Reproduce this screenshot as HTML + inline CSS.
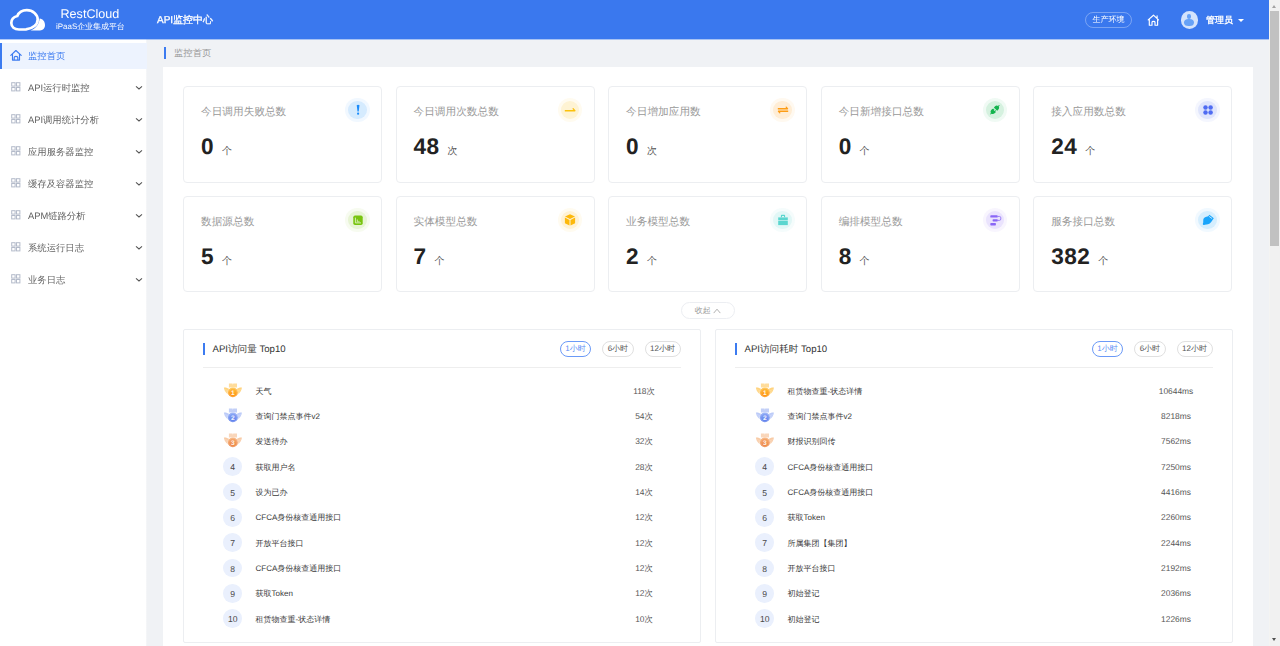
<!DOCTYPE html>
<html><head><meta charset="utf-8"><title>API监控中心</title>
<style>
*{margin:0;padding:0;box-sizing:border-box}
html,body{text-rendering:geometricPrecision;width:1280px;height:646px;overflow:hidden;background:#f0f2f5;font-family:"Liberation Sans",sans-serif;position:relative}
#hdr{position:absolute;left:0;top:0;width:1269px;height:39px;background:#3a78ee;box-shadow:0 1px 0 rgba(59,122,240,.4);z-index:2}
#logo{position:absolute;left:5px;top:5px}
#brand{position:absolute;left:60.5px;top:7px;font-size:12.6px;line-height:15px;color:#fff}
#sub{position:absolute;left:56px;top:21.6px;font-size:7.95px;line-height:9px;color:#fff;white-space:nowrap}
#app{position:absolute;left:157px;top:15px;font-size:10px;line-height:12px;color:#fff;-webkit-text-stroke:0.3px #fff;white-space:nowrap}
#env{position:absolute;left:1085px;top:12px;width:47px;height:15.5px;border:1px solid rgba(255,255,255,.32);border-radius:8px;color:#fff;font-size:8px;line-height:13.5px;text-align:center}
#home{position:absolute;left:1144px;top:11px}
#avatar{position:absolute;left:1180.5px;top:11px;width:17.5px;height:17.5px;border-radius:50%;background:#d4e3fc;overflow:hidden}
#avatar .ah{position:absolute;left:6.3px;top:2.9px;width:4.7px;height:4.7px;border-radius:50%;background:#66a1f7}
#avatar .ab{position:absolute;left:3.9px;top:7.6px;width:9.4px;height:7.2px;border-radius:50%;background:#66a1f7}
#uname{position:absolute;left:1206px;top:14.2px;font-size:9px;line-height:12px;color:#fff;font-weight:bold}
#caret{position:absolute;left:1238px;top:19.3px;width:0;height:0;border-left:3px solid transparent;border-right:3px solid transparent;border-top:3.5px solid #fff}
#side{position:absolute;left:0;top:39px;width:148px;height:607px;background:linear-gradient(90deg,#fff 0,#fff 145.6px,#eceef2 147.2px,#f0f2f5 148px);will-change:transform}
.mi{position:absolute;left:0;width:147px;height:26.67px;margin-top:-39px}
.mi.act{background:#edf3fe;border-left:2px solid #3c7bf0}
.mi .gi{position:absolute;left:11px;top:7.6px}
.mi .hi{position:absolute;left:6px;top:4.33px}
.mi .mt{position:absolute;left:28px;top:7px;font-size:9.33px;line-height:12px;color:#626262;white-space:nowrap}
.mi.act .mt{left:26px;color:#3c7bf0}
.mi .chev{position:absolute;left:135px;top:10.6px}
#main{position:absolute;left:147px;top:39px;width:1122px;height:607px;background:#f0f2f5}
#bcbar{position:absolute;left:17px;top:8px;width:2px;height:12px;background:#3c7bf0}
#bc{position:absolute;left:27px;top:8px;font-size:9.33px;line-height:12px;color:#999}
#wrap{position:absolute;left:16px;top:28px;width:1090px;height:600px;background:#fff}
.card{position:absolute;width:199.3px;height:96.6px;border:1px solid #eceef1;border-radius:4px;background:#fff}
.ct{position:absolute;left:17px;top:17.4px;font-size:10.67px;line-height:14px;color:#999;white-space:nowrap}
.ic{position:absolute;right:11.5px;top:10.5px;width:24.5px;height:24.5px;border-radius:50%}
.ic .ici{position:absolute;left:3px;top:3px;width:18.5px;height:18.5px;border-radius:50%}
.ic svg{position:absolute;left:0.25px;top:0.25px}
.cn{position:absolute;left:17px;top:47.7px;white-space:nowrap}
.num{font-size:22.6px;line-height:24px;font-weight:bold;color:#222;letter-spacing:0.5px}
.unit{font-size:10px;color:#555;margin-left:7.8px;position:relative;top:0.2px}
#collapse{position:absolute;left:681px;top:302px;width:54px;height:17.3px;border:1px solid #eceef2;border-radius:9px;background:#fff;font-size:8px;line-height:15.3px;color:#999;text-align:center}
.panel{position:absolute;top:329.4px;width:518px;height:313.4px;border:1px solid #eceef1;border-radius:2px;background:#fff}
.pbar{position:absolute;left:19px;top:12.5px;width:2.3px;height:12px;background:#3c7bf0}
.ptitle{position:absolute;left:28.5px;top:14px;font-size:9.6px;line-height:12px;color:#333;white-space:nowrap}
.btns{position:absolute;right:19.5px;top:10.5px;display:flex;gap:11px}
.btn{display:block;height:16.3px;padding:0 4.5px;border:1px solid #e0e0e0;border-radius:8.5px;font-size:8px;line-height:14.3px;color:#555;white-space:nowrap}
.btn.act{border-color:#6b9af7;color:#5b8ff6}
.pdiv{position:absolute;left:19px;right:19.5px;top:37px;height:1px;background:#eeeeee}
.rk{position:absolute;width:18.6px;height:18.6px;border-radius:50%;background:#eaf0fd;color:#4a4a4a;font-size:8.6px;line-height:21.6px;text-align:center}
.rn{position:absolute;font-size:8px;line-height:12px;color:#3a3a3a;white-space:nowrap}
.rv{position:absolute;width:80px;text-align:center;font-size:8.4px;line-height:12px;color:#555;white-space:nowrap}
.medal{position:absolute}
#sb{position:absolute;left:1269px;top:0;width:11px;height:646px;background:#f1f1f1;border-left:1px solid #f4f4f2}
#thumb{position:absolute;left:0.2px;top:11px;width:8.5px;height:235px;background:#c1c1c1}
#sbup{position:absolute;left:1.9px;top:4.6px;width:0;height:0;border-left:2.4px solid transparent;border-right:2.4px solid transparent;border-bottom:3px solid #a3a3a3}
#sbdn{position:absolute;left:1.7px;top:638.2px;width:0;height:0;border-left:2.7px solid transparent;border-right:2.7px solid transparent;border-top:3px solid #505050}

</style></head><body>
<div id="hdr">
<svg id="logo" width="45" height="30" viewBox="0 0 45 30"><path d="M12.3 11 C14 7 17.5 5.1 21.8 5.1 C27.8 5.1 32.7 9.5 32.7 14.4 C32.7 19.5 28 23.6 21 24.4 L14 24.5 C9.5 24.5 6.3 21.8 6.3 18.1 C6.3 14.5 9 11.8 12.3 11 Z" fill="none" stroke="#fff" stroke-width="2.7"/><path d="M34.6 13.4 C38 13.8 40 16.6 40 20 C40 23.2 38 25.4 35 25.4 L25.5 25.6 C30.5 23.6 34.3 19.2 34.6 13.4 Z" fill="#fff"/></svg>
<div id="brand">RestCloud</div>
<div id="sub">iPaaS企业集成平台</div>
<div id="app">API监控中心</div>
<div id="env">生产环境</div>
<svg id="home" width="18" height="18" viewBox="0 0 18 18"><path d="M4.2 8.9 L9.5 4.2 L14.5 8.9 M5.3 8 V14.2 H8 V11.2 Q8 10.3 9.5 10.3 Q11 10.3 11 11.2 V14.2 H13.6 V8 M13.1 4.9 V6.9" fill="none" stroke="#fff" stroke-width="1.15" stroke-linejoin="round" stroke-linecap="round"/></svg>
<div id="avatar"><div class="ah"></div><div class="ab"></div></div>
<div id="uname">管理员</div>
<div id="caret"></div>
</div>
<div id="side">
<div class="mi act" style="top:42.67px"><svg class="hi" width="16" height="16" viewBox="0 0 16 16"><path d="M2.8 8.4 L7.9 3.5 L13.2 8.4 M4.5 7.2 V13.1 H11.5 V7.2 M6.2 13.1 V10.4 Q6.2 9.3 7.9 9.3 Q9.8 9.3 9.8 10.4 V13.1" fill="none" stroke="#3c7bf0" stroke-width="1.15" stroke-linejoin="round" stroke-linecap="round"/></svg><span class="mt">监控首页</span></div>
<div class="mi" style="top:74.67px"><svg class="gi" width="10" height="10" viewBox="0 0 10 10"><g fill="none" stroke="#b4bbca" stroke-width="1"><rect x="0.7" y="0.7" width="3.4" height="3.4"/><rect x="5.5" y="0.7" width="3.4" height="3.4"/><rect x="0.7" y="5.5" width="3.4" height="3.4"/><rect x="5.5" y="5.5" width="3.4" height="3.4"/></g></svg><span class="mt">API运行时监控</span><svg class="chev" width="8" height="6" viewBox="0 0 8 6"><path d="M1 1.4 L4 4 L7 1.4" fill="none" stroke="#555" stroke-width="1.05"/></svg></div>
<div class="mi" style="top:106.67px"><svg class="gi" width="10" height="10" viewBox="0 0 10 10"><g fill="none" stroke="#b4bbca" stroke-width="1"><rect x="0.7" y="0.7" width="3.4" height="3.4"/><rect x="5.5" y="0.7" width="3.4" height="3.4"/><rect x="0.7" y="5.5" width="3.4" height="3.4"/><rect x="5.5" y="5.5" width="3.4" height="3.4"/></g></svg><span class="mt">API调用统计分析</span><svg class="chev" width="8" height="6" viewBox="0 0 8 6"><path d="M1 1.4 L4 4 L7 1.4" fill="none" stroke="#555" stroke-width="1.05"/></svg></div>
<div class="mi" style="top:138.67px"><svg class="gi" width="10" height="10" viewBox="0 0 10 10"><g fill="none" stroke="#b4bbca" stroke-width="1"><rect x="0.7" y="0.7" width="3.4" height="3.4"/><rect x="5.5" y="0.7" width="3.4" height="3.4"/><rect x="0.7" y="5.5" width="3.4" height="3.4"/><rect x="5.5" y="5.5" width="3.4" height="3.4"/></g></svg><span class="mt">应用服务器监控</span><svg class="chev" width="8" height="6" viewBox="0 0 8 6"><path d="M1 1.4 L4 4 L7 1.4" fill="none" stroke="#555" stroke-width="1.05"/></svg></div>
<div class="mi" style="top:170.67px"><svg class="gi" width="10" height="10" viewBox="0 0 10 10"><g fill="none" stroke="#b4bbca" stroke-width="1"><rect x="0.7" y="0.7" width="3.4" height="3.4"/><rect x="5.5" y="0.7" width="3.4" height="3.4"/><rect x="0.7" y="5.5" width="3.4" height="3.4"/><rect x="5.5" y="5.5" width="3.4" height="3.4"/></g></svg><span class="mt">缓存及容器监控</span><svg class="chev" width="8" height="6" viewBox="0 0 8 6"><path d="M1 1.4 L4 4 L7 1.4" fill="none" stroke="#555" stroke-width="1.05"/></svg></div>
<div class="mi" style="top:202.67px"><svg class="gi" width="10" height="10" viewBox="0 0 10 10"><g fill="none" stroke="#b4bbca" stroke-width="1"><rect x="0.7" y="0.7" width="3.4" height="3.4"/><rect x="5.5" y="0.7" width="3.4" height="3.4"/><rect x="0.7" y="5.5" width="3.4" height="3.4"/><rect x="5.5" y="5.5" width="3.4" height="3.4"/></g></svg><span class="mt">APM链路分析</span><svg class="chev" width="8" height="6" viewBox="0 0 8 6"><path d="M1 1.4 L4 4 L7 1.4" fill="none" stroke="#555" stroke-width="1.05"/></svg></div>
<div class="mi" style="top:234.67px"><svg class="gi" width="10" height="10" viewBox="0 0 10 10"><g fill="none" stroke="#b4bbca" stroke-width="1"><rect x="0.7" y="0.7" width="3.4" height="3.4"/><rect x="5.5" y="0.7" width="3.4" height="3.4"/><rect x="0.7" y="5.5" width="3.4" height="3.4"/><rect x="5.5" y="5.5" width="3.4" height="3.4"/></g></svg><span class="mt">系统运行日志</span><svg class="chev" width="8" height="6" viewBox="0 0 8 6"><path d="M1 1.4 L4 4 L7 1.4" fill="none" stroke="#555" stroke-width="1.05"/></svg></div>
<div class="mi" style="top:266.67px"><svg class="gi" width="10" height="10" viewBox="0 0 10 10"><g fill="none" stroke="#b4bbca" stroke-width="1"><rect x="0.7" y="0.7" width="3.4" height="3.4"/><rect x="5.5" y="0.7" width="3.4" height="3.4"/><rect x="0.7" y="5.5" width="3.4" height="3.4"/><rect x="5.5" y="5.5" width="3.4" height="3.4"/></g></svg><span class="mt">业务日志</span><svg class="chev" width="8" height="6" viewBox="0 0 8 6"><path d="M1 1.4 L4 4 L7 1.4" fill="none" stroke="#555" stroke-width="1.05"/></svg></div>
</div>
<div id="main">
<div id="bcbar"></div><div id="bc">监控首页</div>
<div id="wrap"></div>
</div>
<div class="card" style="left:183.00px;top:86.40px;height:96.6px">
<div class="ct">今日调用失败总数</div>
<div class="ic" style="background:#1b8cfb10"><div class="ici" style="background:#1b8cfb20"></div><svg viewBox="0 0 24 24" width="24" height="24" fill="#1b8cfb" stroke="#1b8cfb" stroke-width="0"><path d="M10.7 7.2 Q12.1 6.2 13.5 7.2 L12.7 13.6 H11.5 Z"/><circle cx="12.1" cy="15.7" r="1.1"/></svg></div>
<div class="cn"><span class="num">0</span><span class="unit">个</span></div>
</div><div class="card" style="left:395.55px;top:86.40px;height:96.6px">
<div class="ct">今日调用次数总数</div>
<div class="ic" style="background:#fbc10b10"><div class="ici" style="background:#fbc10b20"></div><svg viewBox="0 0 24 24" width="24" height="24" fill="#fbc10b" stroke="#fbc10b" stroke-width="0"><path d="M6.8 11.9 H15.5 L14.5 10.9 Q14.4 10 15.3 10.1 L17.6 12.4 Q17.6 13.5 16.7 13.5 H6.8 Z"/></svg></div>
<div class="cn"><span class="num">48</span><span class="unit">次</span></div>
</div><div class="card" style="left:608.10px;top:86.40px;height:96.6px">
<div class="ct">今日增加应用数</div>
<div class="ic" style="background:#fd9d1610"><div class="ici" style="background:#fd9d1620"></div><svg viewBox="0 0 24 24" width="24" height="24" fill="#fd9d16" stroke="#fd9d16" stroke-width="0"><path d="M6.8 10.1 H15.2 L14.5 9.3 Q14.5 8.3 15.4 8.5 L17.2 10.5 Q17.2 11.4 16.5 11.4 H6.8 Z"/><path d="M17.2 13.9 H8.8 L9.5 14.7 Q9.5 15.7 8.6 15.5 L6.8 13.5 Q6.8 12.6 7.5 12.6 H17.2 Z"/></svg></div>
<div class="cn"><span class="num">0</span><span class="unit">次</span></div>
</div><div class="card" style="left:820.65px;top:86.40px;height:96.6px">
<div class="ct">今日新增接口总数</div>
<div class="ic" style="background:#14b44e10"><div class="ici" style="background:#14b44e20"></div><svg viewBox="0 0 24 24" width="24" height="24" fill="#14b44e" stroke="#14b44e" stroke-width="0"><path transform="translate(5.826 5.779) scale(0.01174)" d="M917.7 148.8l-42.4-42.4c-1.6-1.6-3.6-2.3-5.7-2.3s-4.1.8-5.7 2.3l-76.1 76.1a199.27 199.27 0 00-112.1-34.3c-51.2 0-102.4 19.5-141.5 58.6L432.3 308.7a8.03 8.03 0 000 11.3L704 591.7c1.6 1.6 3.6 2.3 5.7 2.3 2 0 4.1-.8 5.7-2.3l101.9-101.9c68.9-69 77-175.7 24.3-253.5l76.1-76.1c3.1-3.2 3.1-8.3 0-11.4zM578.9 546.7a8.03 8.03 0 00-11.3 0L501 613.3 410.7 523l66.7-66.7c3.1-3.1 3.1-8.2 0-11.3L441 408.6a8.03 8.03 0 00-11.3 0L363 475.3l-43-43a7.85 7.85 0 00-5.7-2.3c-2 0-4.1.8-5.7 2.3L206.8 534.2c-68.9 69-77 175.7-24.3 253.5l-76.1 76.1a8.03 8.03 0 000 11.3l42.4 42.4c1.6 1.6 3.6 2.3 5.7 2.3s4.1-.8 5.7-2.3l76.1-76.1c33.7 22.9 72.9 34.3 112.1 34.3 51.2 0 102.4-19.5 141.5-58.6l101.9-101.9c3.1-3.1 3.1-8.2 0-11.3l-43-43 66.7-66.7c3.1-3.1 3.1-8.2 0-11.3l-36.6-36.2z"/></svg></div>
<div class="cn"><span class="num">0</span><span class="unit">个</span></div>
</div><div class="card" style="left:1033.20px;top:86.40px;height:96.6px">
<div class="ct">接入应用数总数</div>
<div class="ic" style="background:#4f6cf210"><div class="ici" style="background:#4f6cf220"></div><svg viewBox="0 0 24 24" width="24" height="24" fill="#4f6cf2" stroke="#4f6cf2" stroke-width="0"><circle cx="9.5" cy="9.4" r="2.25"/><circle cx="14.6" cy="9.4" r="2.25"/><circle cx="9.5" cy="14.5" r="2.25"/><circle cx="14.6" cy="14.5" r="2.25"/></svg></div>
<div class="cn"><span class="num">24</span><span class="unit">个</span></div>
</div><div class="card" style="left:183.00px;top:196.40px;height:96.1px">
<div class="ct">数据源总数</div>
<div class="ic" style="background:#78c40e10"><div class="ici" style="background:#78c40e20"></div><svg viewBox="0 0 24 24" width="24" height="24" fill="#78c40e" stroke="#78c40e" stroke-width="0"><rect x="7.3" y="7.6" width="9.4" height="9.3" rx="1.7"/><path d="M9.4 9.6 V14.9 H15" fill="none" stroke="#dff2c4" stroke-width="0.9"/><path d="M11.3 11.5 V14.4 M12.9 12.9 V14.4" fill="none" stroke="#dff2c4" stroke-width="0.9"/></svg></div>
<div class="cn"><span class="num">5</span><span class="unit">个</span></div>
</div><div class="card" style="left:395.55px;top:196.40px;height:96.1px">
<div class="ct">实体模型总数</div>
<div class="ic" style="background:#fdb90c10"><div class="ici" style="background:#fdb90c20"></div><svg viewBox="0 0 24 24" width="24" height="24" fill="#fdb90c" stroke="#fdb90c" stroke-width="0"><path d="M12 6.2 L17 8.5 L12 11 L7 8.5 Z"/><path d="M6.9 9.6 L11.5 11.9 V17.5 L6.9 15.2 Z"/><path d="M17.1 9.6 L12.5 11.9 V17.5 L17.1 15.2 Z"/></svg></div>
<div class="cn"><span class="num">7</span><span class="unit">个</span></div>
</div><div class="card" style="left:608.10px;top:196.40px;height:96.1px">
<div class="ct">业务模型总数</div>
<div class="ic" style="background:#5ad6cf10"><div class="ici" style="background:#5ad6cf20"></div><svg viewBox="0 0 24 24" width="24" height="24" fill="#5ad6cf" stroke="#5ad6cf" stroke-width="0"><path d="M9.9 9.2 V7.6 Q9.9 6.8 10.7 6.8 H13.3 Q14.1 6.8 14.1 7.6 V9.2 H13 V7.9 H11 V9.2 Z"/><rect x="7.2" y="9.4" width="9.6" height="2.6"/><rect x="7.2" y="12.6" width="9.6" height="4.5"/></svg></div>
<div class="cn"><span class="num">2</span><span class="unit">个</span></div>
</div><div class="card" style="left:820.65px;top:196.40px;height:96.1px">
<div class="ct">编排模型总数</div>
<div class="ic" style="background:#8a67f610"><div class="ici" style="background:#8a67f620"></div><svg viewBox="0 0 24 24" width="24" height="24" fill="#8a67f6" stroke="#8a67f6" stroke-width="0"><rect x="7.3" y="7.3" width="7.4" height="2.3" rx="0.7"/><rect x="9.6" y="11.3" width="5.2" height="2.2" rx="0.7"/><rect x="7.3" y="15.1" width="5.6" height="2.3" rx="0.7"/><path d="M14.6 8.45 H16.5 Q17.8 8.45 17.8 9.8 V11 Q17.8 12.4 16.4 12.4 H14.8" fill="none" stroke-width="0.8"/></svg></div>
<div class="cn"><span class="num">8</span><span class="unit">个</span></div>
</div><div class="card" style="left:1033.20px;top:196.40px;height:96.1px">
<div class="ct">服务接口总数</div>
<div class="ic" style="background:#1aa5fb10"><div class="ici" style="background:#1aa5fb20"></div><svg viewBox="0 0 24 24" width="24" height="24" fill="#1aa5fb" stroke="#1aa5fb" stroke-width="0"><path d="M13.4 6.7 L17.8 10.3 L15.2 14 Q13.9 15.7 12 16.2 L8.8 16.7 Q7.3 17.4 6.9 16.6 Q6.6 15.8 7.2 14.8 L7.3 11.6 Q7.5 9.9 9.6 9.1 L12.2 8.3 Z"/><path d="M13.1 8.4 L16.1 10.6" fill="none" stroke="#e3f3fe" stroke-width="0.8"/></svg></div>
<div class="cn"><span class="num">382</span><span class="unit">个</span></div>
</div>
<div id="collapse">收起<svg width="8" height="6" viewBox="0 0 8 6" style="margin-left:2.4px;vertical-align:-0.5px"><path d="M0.7 5.1 L4 1.2 L7.3 5.1" fill="none" stroke="#a8a8a8" stroke-width="0.9"/></svg></div>
<div class="panel" style="left:183px">
<div class="pbar"></div><div class="ptitle">API访问量 Top10</div>
<div class="btns"><span class="btn act">1小时</span><span class="btn">6小时</span><span class="btn">12小时</span></div>
<div class="pdiv"></div>
</div>
<svg class="medal" style="left:222.70px;top:379.60px" width="20" height="20" viewBox="0 0 20 20">
<defs><linearGradient id="mg1_232" x1="0" y1="0" x2="0" y2="1"><stop offset="0" stop-color="#ffc246"/><stop offset="1" stop-color="#ff8d0a"/></linearGradient></defs>
<path d="M5.9 3.4 H9.6 L9.9 5 L10.2 3.4 H14 V7.6 H5.9 Z" fill="#ffdc9a"/>
<path d="M6.4 9 C4.6 7.8 2.6 7.2 0.9 7.5 C1.1 10.4 2.6 13 5.6 14.4 Z" fill="#ffd37e"/>
<path d="M13.4 9 C15.2 7.8 17.2 7.2 18.9 7.5 C18.7 10.4 17.2 13 14.2 14.4 Z" fill="#ffd37e"/>
<path d="M1.6 9.6 L5 10.6 M2.2 11.6 L5 12.2 M3 13.4 L5.4 13.6 M18.2 9.6 L14.8 10.6 M17.6 11.6 L14.8 12.2 M16.8 13.4 L14.4 13.6" stroke="#fff" stroke-opacity="0.45" stroke-width="0.5"/>
<circle cx="9.9" cy="12.4" r="5.3" fill="#fff" fill-opacity="0.6"/><circle cx="9.9" cy="12.4" r="4.9" fill="url(#mg1_232)"/>
<circle cx="9.9" cy="12.4" r="4.2" fill="none" stroke="#fff" stroke-opacity="0.35" stroke-width="0.5"/>
<text x="9.9" y="14.9" font-size="6.6" font-weight="bold" fill="#fff" fill-opacity="0.9" text-anchor="middle" font-family="Liberation Sans">1</text></svg>
<div class="rn" style="left:255.50px;top:385.60px">天气</div>
<div class="rv" style="left:604.00px;top:384.60px">118次</div>
<svg class="medal" style="left:222.70px;top:404.94px" width="20" height="20" viewBox="0 0 20 20">
<defs><linearGradient id="mg2_232" x1="0" y1="0" x2="0" y2="1"><stop offset="0" stop-color="#8eaaf7"/><stop offset="1" stop-color="#5b7deb"/></linearGradient></defs>
<path d="M5.9 3.4 H9.6 L9.9 5 L10.2 3.4 H14 V7.6 H5.9 Z" fill="#c2cff7"/>
<path d="M6.4 9 C4.6 7.8 2.6 7.2 0.9 7.5 C1.1 10.4 2.6 13 5.6 14.4 Z" fill="#bccbf8"/>
<path d="M13.4 9 C15.2 7.8 17.2 7.2 18.9 7.5 C18.7 10.4 17.2 13 14.2 14.4 Z" fill="#bccbf8"/>
<path d="M1.6 9.6 L5 10.6 M2.2 11.6 L5 12.2 M3 13.4 L5.4 13.6 M18.2 9.6 L14.8 10.6 M17.6 11.6 L14.8 12.2 M16.8 13.4 L14.4 13.6" stroke="#fff" stroke-opacity="0.45" stroke-width="0.5"/>
<circle cx="9.9" cy="12.4" r="5.3" fill="#fff" fill-opacity="0.6"/><circle cx="9.9" cy="12.4" r="4.9" fill="url(#mg2_232)"/>
<circle cx="9.9" cy="12.4" r="4.2" fill="none" stroke="#fff" stroke-opacity="0.35" stroke-width="0.5"/>
<text x="9.9" y="14.9" font-size="6.6" font-weight="bold" fill="#fff" fill-opacity="0.9" text-anchor="middle" font-family="Liberation Sans">2</text></svg>
<div class="rn" style="left:255.50px;top:410.94px">查询门禁点事件v2</div>
<div class="rv" style="left:604.00px;top:409.94px">54次</div>
<svg class="medal" style="left:222.70px;top:430.28px" width="20" height="20" viewBox="0 0 20 20">
<defs><linearGradient id="mg3_232" x1="0" y1="0" x2="0" y2="1"><stop offset="0" stop-color="#f7ae74"/><stop offset="1" stop-color="#eb8241"/></linearGradient></defs>
<path d="M5.9 3.4 H9.6 L9.9 5 L10.2 3.4 H14 V7.6 H5.9 Z" fill="#f9d6ba"/>
<path d="M6.4 9 C4.6 7.8 2.6 7.2 0.9 7.5 C1.1 10.4 2.6 13 5.6 14.4 Z" fill="#f8cba6"/>
<path d="M13.4 9 C15.2 7.8 17.2 7.2 18.9 7.5 C18.7 10.4 17.2 13 14.2 14.4 Z" fill="#f8cba6"/>
<path d="M1.6 9.6 L5 10.6 M2.2 11.6 L5 12.2 M3 13.4 L5.4 13.6 M18.2 9.6 L14.8 10.6 M17.6 11.6 L14.8 12.2 M16.8 13.4 L14.4 13.6" stroke="#fff" stroke-opacity="0.45" stroke-width="0.5"/>
<circle cx="9.9" cy="12.4" r="5.3" fill="#fff" fill-opacity="0.6"/><circle cx="9.9" cy="12.4" r="4.9" fill="url(#mg3_232)"/>
<circle cx="9.9" cy="12.4" r="4.2" fill="none" stroke="#fff" stroke-opacity="0.35" stroke-width="0.5"/>
<text x="9.9" y="14.9" font-size="6.6" font-weight="bold" fill="#fff" fill-opacity="0.9" text-anchor="middle" font-family="Liberation Sans">3</text></svg>
<div class="rn" style="left:255.50px;top:436.28px">发送待办</div>
<div class="rv" style="left:604.00px;top:435.28px">32次</div>
<div class="rk" style="left:223.40px;top:457.32px">4</div>
<div class="rn" style="left:255.50px;top:461.62px">获取用户名</div>
<div class="rv" style="left:604.00px;top:460.62px">28次</div>
<div class="rk" style="left:223.40px;top:482.66px">5</div>
<div class="rn" style="left:255.50px;top:486.96px">设为已办</div>
<div class="rv" style="left:604.00px;top:485.96px">14次</div>
<div class="rk" style="left:223.40px;top:508.00px">6</div>
<div class="rn" style="left:255.50px;top:512.30px">CFCA身份核查通用接口</div>
<div class="rv" style="left:604.00px;top:511.30px">12次</div>
<div class="rk" style="left:223.40px;top:533.34px">7</div>
<div class="rn" style="left:255.50px;top:537.64px">开放平台接口</div>
<div class="rv" style="left:604.00px;top:536.64px">12次</div>
<div class="rk" style="left:223.40px;top:558.68px">8</div>
<div class="rn" style="left:255.50px;top:562.98px">CFCA身份核查通用接口</div>
<div class="rv" style="left:604.00px;top:561.98px">12次</div>
<div class="rk" style="left:223.40px;top:584.02px">9</div>
<div class="rn" style="left:255.50px;top:588.32px">获取Token</div>
<div class="rv" style="left:604.00px;top:587.32px">12次</div>
<div class="rk" style="left:223.40px;top:609.36px">10</div>
<div class="rn" style="left:255.50px;top:613.66px">租赁物查重-状态详情</div>
<div class="rv" style="left:604.00px;top:612.66px">10次</div>
<div class="panel" style="left:715px">
<div class="pbar"></div><div class="ptitle">API访问耗时 Top10</div>
<div class="btns"><span class="btn act">1小时</span><span class="btn">6小时</span><span class="btn">12小时</span></div>
<div class="pdiv"></div>
</div>
<svg class="medal" style="left:754.70px;top:379.60px" width="20" height="20" viewBox="0 0 20 20">
<defs><linearGradient id="mg1_764" x1="0" y1="0" x2="0" y2="1"><stop offset="0" stop-color="#ffc246"/><stop offset="1" stop-color="#ff8d0a"/></linearGradient></defs>
<path d="M5.9 3.4 H9.6 L9.9 5 L10.2 3.4 H14 V7.6 H5.9 Z" fill="#ffdc9a"/>
<path d="M6.4 9 C4.6 7.8 2.6 7.2 0.9 7.5 C1.1 10.4 2.6 13 5.6 14.4 Z" fill="#ffd37e"/>
<path d="M13.4 9 C15.2 7.8 17.2 7.2 18.9 7.5 C18.7 10.4 17.2 13 14.2 14.4 Z" fill="#ffd37e"/>
<path d="M1.6 9.6 L5 10.6 M2.2 11.6 L5 12.2 M3 13.4 L5.4 13.6 M18.2 9.6 L14.8 10.6 M17.6 11.6 L14.8 12.2 M16.8 13.4 L14.4 13.6" stroke="#fff" stroke-opacity="0.45" stroke-width="0.5"/>
<circle cx="9.9" cy="12.4" r="5.3" fill="#fff" fill-opacity="0.6"/><circle cx="9.9" cy="12.4" r="4.9" fill="url(#mg1_764)"/>
<circle cx="9.9" cy="12.4" r="4.2" fill="none" stroke="#fff" stroke-opacity="0.35" stroke-width="0.5"/>
<text x="9.9" y="14.9" font-size="6.6" font-weight="bold" fill="#fff" fill-opacity="0.9" text-anchor="middle" font-family="Liberation Sans">1</text></svg>
<div class="rn" style="left:787.50px;top:385.60px">租赁物查重-状态详情</div>
<div class="rv" style="left:1136.00px;top:384.60px">10644ms</div>
<svg class="medal" style="left:754.70px;top:404.94px" width="20" height="20" viewBox="0 0 20 20">
<defs><linearGradient id="mg2_764" x1="0" y1="0" x2="0" y2="1"><stop offset="0" stop-color="#8eaaf7"/><stop offset="1" stop-color="#5b7deb"/></linearGradient></defs>
<path d="M5.9 3.4 H9.6 L9.9 5 L10.2 3.4 H14 V7.6 H5.9 Z" fill="#c2cff7"/>
<path d="M6.4 9 C4.6 7.8 2.6 7.2 0.9 7.5 C1.1 10.4 2.6 13 5.6 14.4 Z" fill="#bccbf8"/>
<path d="M13.4 9 C15.2 7.8 17.2 7.2 18.9 7.5 C18.7 10.4 17.2 13 14.2 14.4 Z" fill="#bccbf8"/>
<path d="M1.6 9.6 L5 10.6 M2.2 11.6 L5 12.2 M3 13.4 L5.4 13.6 M18.2 9.6 L14.8 10.6 M17.6 11.6 L14.8 12.2 M16.8 13.4 L14.4 13.6" stroke="#fff" stroke-opacity="0.45" stroke-width="0.5"/>
<circle cx="9.9" cy="12.4" r="5.3" fill="#fff" fill-opacity="0.6"/><circle cx="9.9" cy="12.4" r="4.9" fill="url(#mg2_764)"/>
<circle cx="9.9" cy="12.4" r="4.2" fill="none" stroke="#fff" stroke-opacity="0.35" stroke-width="0.5"/>
<text x="9.9" y="14.9" font-size="6.6" font-weight="bold" fill="#fff" fill-opacity="0.9" text-anchor="middle" font-family="Liberation Sans">2</text></svg>
<div class="rn" style="left:787.50px;top:410.94px">查询门禁点事件v2</div>
<div class="rv" style="left:1136.00px;top:409.94px">8218ms</div>
<svg class="medal" style="left:754.70px;top:430.28px" width="20" height="20" viewBox="0 0 20 20">
<defs><linearGradient id="mg3_764" x1="0" y1="0" x2="0" y2="1"><stop offset="0" stop-color="#f7ae74"/><stop offset="1" stop-color="#eb8241"/></linearGradient></defs>
<path d="M5.9 3.4 H9.6 L9.9 5 L10.2 3.4 H14 V7.6 H5.9 Z" fill="#f9d6ba"/>
<path d="M6.4 9 C4.6 7.8 2.6 7.2 0.9 7.5 C1.1 10.4 2.6 13 5.6 14.4 Z" fill="#f8cba6"/>
<path d="M13.4 9 C15.2 7.8 17.2 7.2 18.9 7.5 C18.7 10.4 17.2 13 14.2 14.4 Z" fill="#f8cba6"/>
<path d="M1.6 9.6 L5 10.6 M2.2 11.6 L5 12.2 M3 13.4 L5.4 13.6 M18.2 9.6 L14.8 10.6 M17.6 11.6 L14.8 12.2 M16.8 13.4 L14.4 13.6" stroke="#fff" stroke-opacity="0.45" stroke-width="0.5"/>
<circle cx="9.9" cy="12.4" r="5.3" fill="#fff" fill-opacity="0.6"/><circle cx="9.9" cy="12.4" r="4.9" fill="url(#mg3_764)"/>
<circle cx="9.9" cy="12.4" r="4.2" fill="none" stroke="#fff" stroke-opacity="0.35" stroke-width="0.5"/>
<text x="9.9" y="14.9" font-size="6.6" font-weight="bold" fill="#fff" fill-opacity="0.9" text-anchor="middle" font-family="Liberation Sans">3</text></svg>
<div class="rn" style="left:787.50px;top:436.28px">财报识别回传</div>
<div class="rv" style="left:1136.00px;top:435.28px">7562ms</div>
<div class="rk" style="left:755.40px;top:457.32px">4</div>
<div class="rn" style="left:787.50px;top:461.62px">CFCA身份核查通用接口</div>
<div class="rv" style="left:1136.00px;top:460.62px">7250ms</div>
<div class="rk" style="left:755.40px;top:482.66px">5</div>
<div class="rn" style="left:787.50px;top:486.96px">CFCA身份核查通用接口</div>
<div class="rv" style="left:1136.00px;top:485.96px">4416ms</div>
<div class="rk" style="left:755.40px;top:508.00px">6</div>
<div class="rn" style="left:787.50px;top:512.30px">获取Token</div>
<div class="rv" style="left:1136.00px;top:511.30px">2260ms</div>
<div class="rk" style="left:755.40px;top:533.34px">7</div>
<div class="rn" style="left:787.50px;top:537.64px">所属集团【集团】</div>
<div class="rv" style="left:1136.00px;top:536.64px">2244ms</div>
<div class="rk" style="left:755.40px;top:558.68px">8</div>
<div class="rn" style="left:787.50px;top:562.98px">开放平台接口</div>
<div class="rv" style="left:1136.00px;top:561.98px">2192ms</div>
<div class="rk" style="left:755.40px;top:584.02px">9</div>
<div class="rn" style="left:787.50px;top:588.32px">初始登记</div>
<div class="rv" style="left:1136.00px;top:587.32px">2036ms</div>
<div class="rk" style="left:755.40px;top:609.36px">10</div>
<div class="rn" style="left:787.50px;top:613.66px">初始登记</div>
<div class="rv" style="left:1136.00px;top:612.66px">1226ms</div>
<div id="sb"><div id="sbup"></div><div id="thumb"></div><div id="sbdn"></div></div>
</body></html>
